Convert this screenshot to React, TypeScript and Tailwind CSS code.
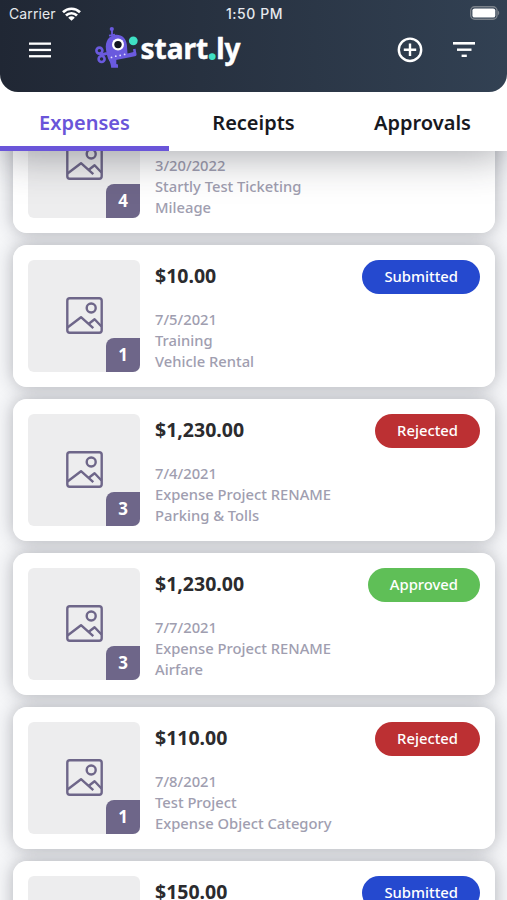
import { useState } from 'react';
import { clsx } from 'clsx';

type Status = 'Submitted' | 'Rejected' | 'Approved';

interface Expense {
  id: number;
  amount?: string;
  date?: string;
  project?: string;
  category?: string;
  receipts?: number;
  status?: Status;
}

const TABS = ['Expenses', 'Receipts', 'Approvals'];

const EXPENSES: Expense[] = [
  { id: 1, date: '3/20/2022', project: 'Startly Test Ticketing', category: 'Mileage', receipts: 4 },
  { id: 2, amount: '$10.00', date: '7/5/2021', project: 'Training', category: 'Vehicle Rental', receipts: 1, status: 'Submitted' },
  { id: 3, amount: '$1,230.00', date: '7/4/2021', project: 'Expense Project RENAME', category: 'Parking & Tolls', receipts: 3, status: 'Rejected' },
  { id: 4, amount: '$1,230.00', date: '7/7/2021', project: 'Expense Project RENAME', category: 'Airfare', receipts: 3, status: 'Approved' },
  { id: 5, amount: '$110.00', date: '7/8/2021', project: 'Test Project', category: 'Expense Object Category', receipts: 1, status: 'Rejected' },
  { id: 6, amount: '$150.00', status: 'Submitted' },
];

const STATUS_COLOR: Record<Status, string> = {
  Submitted: 'bg-[#2549cf]',
  Rejected: 'bg-[#bc3033]',
  Approved: 'bg-[#5fbf57]',
};

function StatusBar() {
  return (
    <div className="grid h-7 grid-cols-3 items-center pl-[9px] pr-[7px] font-['Inter','Liberation_Sans',sans-serif] text-[14px] text-[#e6e9ed]">
      <div className="-mt-px flex items-center gap-1.5">
        <span className="tracking-[0.1px]">Carrier</span>
        <svg width="19" height="14" viewBox="0 0 19 14" fill="none" stroke="#fff" strokeWidth="2.7">
          <path d="M1 5.2a12.2 12.2 0 0 1 17 0" />
          <path d="M4 8.5a7.8 7.8 0 0 1 11 0" />
          <path d="M9.5 13.8 6.2 10.7a4.6 4.6 0 0 1 6.6 0z" fill="#fff" stroke="none" />
        </svg>
      </div>
      <span className="-mt-px text-center font-medium tracking-[0.55px]">1:50 PM</span>
      <svg className="-mt-[3px] justify-self-end" width="30" height="14" viewBox="0 0 30 14">
        <rect x="0.7" y="0.7" width="26.3" height="12.6" rx="4" fill="none" stroke="#7b828b" strokeWidth="1.4" />
        <rect x="2.4" y="2.4" width="22.9" height="9.2" rx="2.2" fill="#fff" />
        <path d="M28 4.8c1.6.5 1.6 3.9 0 4.4z" fill="#7b828b" />
      </svg>
    </div>
  );
}

function Robot() {
  return (
    <svg width="44" height="44" viewBox="0 0 44 44" fill="none">
      {/* wind-up key */}
      <g stroke="#6a5ade" strokeWidth="2.6">
        <circle cx="4.4" cy="24.6" r="3" />
        <circle cx="6.6" cy="33" r="3" />
        <path d="M5 29.2 12 27.4" strokeWidth="3" />
      </g>
      {/* antenna */}
      <circle cx="16.8" cy="3" r="2.1" fill="#6a5ade" />
      <path d="M17 4v6M14 9.6l6-1" stroke="#6a5ade" strokeWidth="1.8" />
      {/* body with arm, then the leg */}
      <path
        d="M11 23.5C9.800 15.500 14 9.300 20.800 8.800 27 8.500 31.300 12.600 31.900 19l.6 8.400 6-1.300-.6-2.800 2.600-.6 1 5.200c.2 1.300-.3 2-1.600 2.400l-25.200 5C12.500 32.500 11.600 28 11 23.500Z"
        fill="#6a5ade"
      />
      <path d="M14 34h7.300v4l1.700.5v3.200h-6.800c-.2-3-1-5.200-2.200-7.700Z" fill="#6a5ade" />
      <circle cx="23" cy="18.6" r="6" fill="#fff" />
      <circle cx="23" cy="18.6" r="3.7" fill="#111522" />
      <g fill="#e4e0ff">
        <circle cx="16.5" cy="31.4" r="0.9" />
        <circle cx="20.8" cy="30.2" r="0.9" />
        <circle cx="25.2" cy="29.4" r="0.9" />
        <circle cx="29.6" cy="28.4" r="0.9" />
      </g>
      <circle cx="38.3" cy="14.8" r="4.4" fill="#3fe0c5" />
    </svg>
  );
}

function Logo() {
  return (
    <div className="flex items-start">
      <Robot />
      <svg width="104" height="44" viewBox="0 0 104 44" aria-label="start.ly">
        <text
          x="1.5"
          y="32.5"
          textLength="100"
          lengthAdjust="spacingAndGlyphs"
          stroke="#fff"
          strokeWidth="0.5"
          strokeLinejoin="round"
          className="fill-white font-['Noto_Sans','Open_Sans',sans-serif] text-[29px] font-bold"
        >
          start<tspan fill="#3fe0c5" stroke="#3fe0c5" strokeWidth="2">.</tspan>ly
        </text>
      </svg>
    </div>
  );
}

function Header() {
  return (
    <header className="h-[92px] rounded-b-[18px] bg-linear-to-r from-[#202734] to-[#324153]">
      <StatusBar />
      <div className="flex items-start pl-[29px] pr-8">
        <button type="button" aria-label="Menu" className="mt-[14px]">
          <svg width="22" height="16" viewBox="0 0 22 16" fill="#fff">
            <rect y="0.5" width="22" height="2.3" />
            <rect y="6.8" width="22" height="2.3" />
            <rect y="13.1" width="22" height="2.3" />
          </svg>
        </button>
        <div className="-mt-[2px] ml-[44px]">
          <Logo />
        </div>
        <div className="ml-auto flex items-start gap-[30px]">
          <button type="button" aria-label="Add expense" className="mt-[9px]">
            <svg width="26" height="26" viewBox="0 0 26 26" fill="none" stroke="#fff" strokeWidth="2.4">
              <circle cx="13" cy="12.8" r="11.2" />
              <path d="M13 6.6v12.4M6.8 12.8h12.4" />
            </svg>
          </button>
          <button type="button" aria-label="Filter" className="mt-[14px]">
            <svg width="22" height="16" viewBox="0 0 22 16" fill="#fff">
              <rect y="0" width="22" height="2.6" />
              <rect x="4" y="6.5" width="14.5" height="2.4" />
              <rect x="8.6" y="12.6" width="5.2" height="2.4" />
            </svg>
          </button>
        </div>
      </div>
    </header>
  );
}

function Thumbnail({ count }: { count?: number }) {
  return (
    <div className="relative flex size-28 shrink-0 justify-center rounded-[6px] bg-[#ededee] pt-[37px]">
      <svg width="37" height="37" viewBox="0 0 37 37" fill="none" stroke="#6e6689" strokeWidth="2.4" strokeLinejoin="round">
        <rect x="1.3" y="1.3" width="34.4" height="34.4" rx="2.5" />
        <circle cx="25.2" cy="11" r="4.5" />
        <path d="M1.5 30.5 15 20.2 27.3 31.2" />
        <path d="M22.5 27 28.6 22.2 35.5 29.5" />
      </svg>
      {count !== undefined && (
        <span className="absolute bottom-0 right-0 flex size-[34px] items-center justify-center rounded-br-[7px] rounded-tl-[8px] bg-[#6e6689] text-[17px] font-bold text-white">
          {count}
        </span>
      )}
    </div>
  );
}

function ExpenseCard({ expense }: { expense: Expense }) {
  return (
    <li className="rounded-[14px] shadow-[0_0_18px_rgba(40,45,60,0.34)]">
      {/* relative keeps the neighbours' shadows underneath */}
      <div className="relative flex h-[142px] rounded-[14px] bg-white p-[15px] pt-[14.5px]">
        <Thumbnail count={expense.receipts} />
        <div className="ml-[15px] flex flex-1 flex-col">
          <div className="flex h-[34px] items-center justify-between">
            <span className="-mt-px text-[19.5px] font-bold text-[#2b2b2e]">{expense.amount}</span>
            {expense.status && (
              <span
                className={clsx(
                  'flex h-[34px] items-center rounded-full px-[22px] pb-px text-[14.8px] font-medium text-white',
                  STATUS_COLOR[expense.status]
                )}
              >
                {expense.status}
              </span>
            )}
          </div>
          <div className="mt-[15.5px] text-[14.75px] font-medium leading-[21px] text-[#a09eb0]">
            <p>{expense.date}</p>
            <p>{expense.project}</p>
            <p>{expense.category}</p>
          </div>
        </div>
      </div>
    </li>
  );
}

export default function App() {
  const [active, setActive] = useState('Expenses');

  return (
    <div className="flex h-[900px] w-[507px] flex-col overflow-hidden bg-[#f6f7f9] font-['Noto_Sans','Open_Sans',sans-serif]">
      <div className="relative z-10 shrink-0 bg-white shadow-[0_4px_40px_rgba(30,32,45,0.4)]">
        <Header />
        <nav className="grid h-[59px] grid-cols-3">
          {TABS.map((tab) => (
            <button
              key={tab}
              type="button"
              onClick={() => setActive(tab)}
              className={clsx(
                'border-b-[5px] pt-[7px] text-[20px] font-semibold',
                tab === active ? 'border-[#6a55d9] text-[#6a55d9]' : 'border-transparent text-[#17191f]'
              )}
            >
              {tab}
            </button>
          ))}
        </nav>
      </div>

      <main className="min-h-0 flex-1 overflow-hidden">
        <ul className="-mt-[60px] flex flex-col gap-3 pl-[13px] pr-3">
          {EXPENSES.map((expense) => (
            <ExpenseCard key={expense.id} expense={expense} />
          ))}
        </ul>
      </main>
    </div>
  );
}
